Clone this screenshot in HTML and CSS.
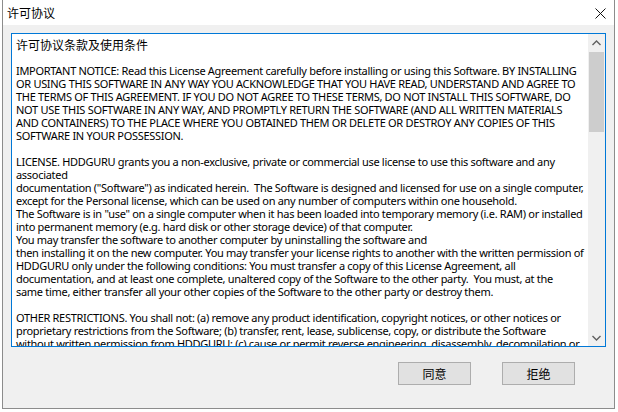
FILE: index.html
```html
<!DOCTYPE html>
<html>

<head>
    <title>许可协议</title>
    <link rel="stylesheet" href="styles.css">
</head>

<body>
    <div class="dialog">
        <div class="titlebar">
            <span class="title">许可协议</span>
            <svg class="close" width="11" height="11" viewBox="0 0 11 11">
                <path d="M0.5 0.5 L10.5 10.5 M10.5 0.5 L0.5 10.5" stroke="#111" stroke-width="1" fill="none" />
            </svg>
        </div>

        <div class="client">
            <div class="textbox">
                <div class="content">
                    <div class="heading">许可协议条款及使用条件</div>
<div class="lines">IMPORTANT NOTICE: Read this License Agreement carefully before installing or using this Software. BY INSTALLING
OR USING THIS SOFTWARE IN ANY WAY YOU ACKNOWLEDGE THAT YOU HAVE READ, UNDERSTAND AND AGREE TO
THE TERMS OF THIS AGREEMENT. IF YOU DO NOT AGREE TO THESE TERMS, DO NOT INSTALL THIS SOFTWARE, DO
NOT USE THIS SOFTWARE IN ANY WAY, AND PROMPTLY RETURN THE SOFTWARE (AND ALL WRITTEN MATERIALS
AND CONTAINERS) TO THE PLACE WHERE YOU OBTAINED THEM OR DELETE OR DESTROY ANY COPIES OF THIS
SOFTWARE IN YOUR POSSESSION.

LICENSE. HDDGURU grants you a non-exclusive, private or commercial use license to use this software and any
associated
documentation ("Software") as indicated herein.  The Software is designed and licensed for use on a single computer,
except for the Personal license, which can be used on any number of computers within one household.
The Software is in "use" on a single computer when it has been loaded into temporary memory (i.e. RAM) or installed
into permanent memory (e.g. hard disk or other storage device) of that computer.
You may transfer the software to another computer by uninstalling the software and
then installing it on the new computer. You may transfer your license rights to another with the written permission of
HDDGURU only under the following conditions: You must transfer a copy of this License Agreement, all
documentation, and at least one complete, unaltered copy of the Software to the other party.  You must, at the
same time, either transfer all your other copies of the Software to the other party or destroy them.

OTHER RESTRICTIONS. You shall not: (a) remove any product identification, copyright notices, or other notices or
proprietary restrictions from the Software; (b) transfer, rent, lease, sublicense, copy, or distribute the Software
without written permission from HDDGURU; (c) cause or permit reverse engineering, disassembly, decompilation or
alteration of the Software.</div>
                </div>
                <div class="scrollbar">
                    <div class="arrow">
                        <svg width="9" height="6" viewBox="0 0 9 6">
                            <path d="M0.5 5 L4.5 1 L8.5 5" stroke="#606060" stroke-width="1.4" fill="none" />
                        </svg>
                    </div>
                    <div class="track">
                        <div class="thumb"></div>
                    </div>
                    <div class="arrow">
                        <svg width="9" height="6" viewBox="0 0 9 6">
                            <path d="M0.5 1 L4.5 5 L8.5 1" stroke="#606060" stroke-width="1.4" fill="none" />
                        </svg>
                    </div>
                </div>
            </div>

            <div class="buttons">
                <button class="btn">同意</button>
                <button class="btn">拒绝</button>
            </div>
        </div>
    </div>

    <div class="behind">tor. You may transfer your license rights to another with the written permission of</div>
</body>

</html>
```

FILE: styles.css
```css
body {
    margin: 0;
    background-color: #ffffff;
    font-family: "Noto Sans", "Noto Sans CJK SC", sans-serif;
    font-size: 12px;
    color: #000;
    overflow: hidden;
}

.dialog {
    margin-left: 2px;
    width: 611px;
    border: 1px solid #8c8c8c;
    border-top: none;
    background-color: #f0f0f0;
}

.titlebar {
    height: 25px;
    background-color: #ffffff;
    display: flex;
    align-items: center;
    justify-content: space-between;
    padding: 0 8px 0 4px;
}

.title {
    font-family: "Noto Sans CJK SC", sans-serif;
    font-size: 12px;
}

.close {
    margin-top: 2px;
}

.client {
    padding: 8px 8px 0 8px;
    height: 383px;
    box-sizing: border-box;
}

.textbox {
    height: 314px;
    box-sizing: border-box;
    border: 1px solid #0078d7;
    background-color: #ffffff;
    display: flex;
}

.content {
    flex: 1;
    overflow: hidden;
    padding: 4px 0 0 4px;
}

.heading {
    font-family: "Noto Sans CJK SC", sans-serif;
    font-size: 12px;
    line-height: 13px;
    height: 26px;
}

.lines {
    white-space: pre;
    line-height: 13px;
    font-size: 11px;
    letter-spacing: -0.3px;
}

.scrollbar {
    width: 17px;
    background-color: #f0f0f0;
    display: flex;
    flex-direction: column;
}

.arrow {
    height: 17px;
    display: flex;
    align-items: center;
    justify-content: center;
}

.track {
    flex: 1;
    padding: 1px;
}

.thumb {
    height: 80px;
    background-color: #cdcdcd;
}

.buttons {
    display: flex;
    justify-content: flex-end;
    gap: 31px;
    padding: 15px 31px 0 0;
}

.btn {
    width: 73px;
    height: 23px;
    border: 1px solid #adadad;
    background-color: #e1e1e1;
    font-family: "Noto Sans CJK SC", sans-serif;
    font-size: 12px;
    padding: 0;
}

.behind {
    margin-top: 0;
    padding-left: 2px;
    color: #444;
    white-space: nowrap;
}
```
